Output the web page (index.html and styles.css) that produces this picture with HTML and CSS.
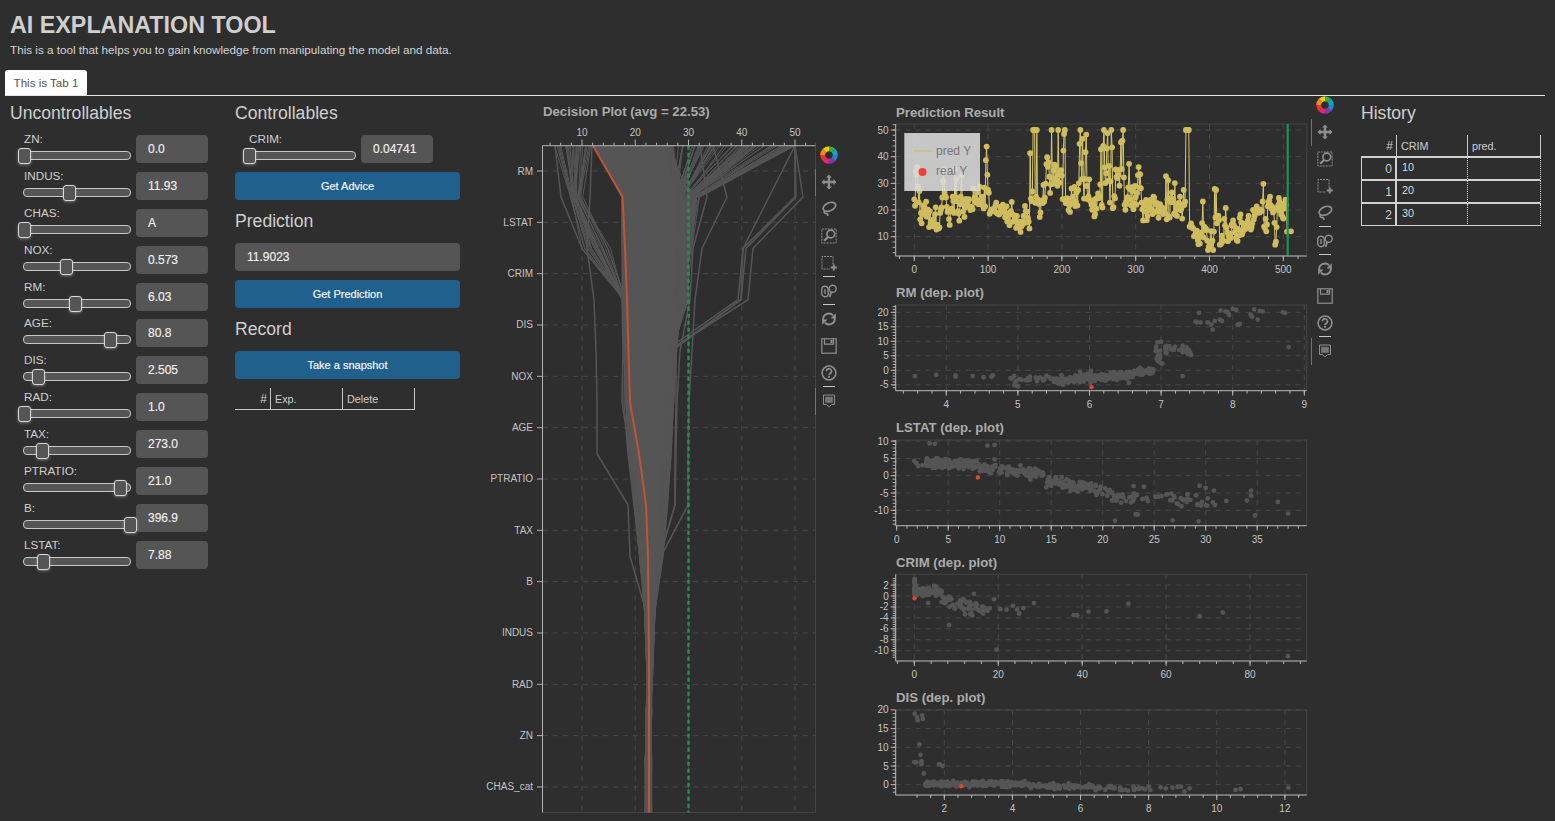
FILE: index.html
```html
<!DOCTYPE html>
<html lang="en">
<head>
<meta charset="utf-8">
<title>AI Explanation Tool</title>
<link rel="stylesheet" href="styles.css">
</head>
<body>
<svg class="sprites" aria-hidden="true">
  <symbol id="i-logo" viewBox="0 0 16 16">
    <path fill="#2fb344" d="M8 .2A7.800 7.800 0 0 1 13.500 2.500L10.400 5.600A3.400 3.400 0 0 0 8 4.600Z"/>
    <path fill="#13a8b8" transform="rotate(45 8 8)" d="M8 .2A7.800 7.800 0 0 1 13.500 2.500L10.400 5.600A3.400 3.400 0 0 0 8 4.600Z"/>
    <path fill="#2b7fd6" transform="rotate(90 8 8)" d="M8 .2A7.800 7.800 0 0 1 13.500 2.500L10.400 5.600A3.400 3.400 0 0 0 8 4.600Z"/>
    <path fill="#7d3aa8" transform="rotate(135 8 8)" d="M8 .2A7.800 7.800 0 0 1 13.500 2.500L10.400 5.600A3.400 3.400 0 0 0 8 4.600Z"/>
    <path fill="#e0257a" transform="rotate(180 8 8)" d="M8 .2A7.800 7.800 0 0 1 13.500 2.500L10.400 5.600A3.400 3.400 0 0 0 8 4.600Z"/>
    <path fill="#e8372c" transform="rotate(225 8 8)" d="M8 .2A7.800 7.800 0 0 1 13.500 2.500L10.400 5.600A3.400 3.400 0 0 0 8 4.600Z"/>
    <path fill="#f5871f" transform="rotate(270 8 8)" d="M8 .2A7.800 7.800 0 0 1 13.500 2.500L10.400 5.600A3.400 3.400 0 0 0 8 4.600Z"/>
    <path fill="#f4c81e" transform="rotate(315 8 8)" d="M8 .2A7.800 7.800 0 0 1 13.500 2.500L10.400 5.600A3.400 3.400 0 0 0 8 4.600Z"/>
  </symbol>
  <symbol id="i-pan" viewBox="0 0 16 16">
    <path fill="currentColor" d="M8 .5l2.900 3H9.200v3.300h3.300V5.100L15.500 8l-3 2.900V9.200H9.200v3.300h1.700L8 15.500l-2.900-3h1.700V9.200H3.500v1.700L.5 8l3-2.900v1.700h3.300V3.500H5.100z"/>
  </symbol>
  <symbol id="i-lasso" viewBox="0 0 16 16">
    <g fill="none" stroke="currentColor" stroke-width="1.700">
      <ellipse cx="8.400" cy="5.800" rx="6.600" ry="4" transform="rotate(-24 8.400 5.800)"/>
      <path d="M3.800 9.200c-1.300 1.900-.4 3.300 1.600 3.500 1.200.1 1.700.7 1.200 2.300"/>
    </g>
  </symbol>
  <symbol id="i-zoom" viewBox="0 0 16 16">
    <rect x=".8" y="1" width="14.400" height="14" fill="none" stroke="currentColor" stroke-dasharray="2 1"/>
    <circle cx="9.800" cy="6" r="3.900" fill="#2e2e2e" stroke="currentColor" stroke-width="1.700"/>
    <path d="M7 8.900L3.200 12.800" stroke="currentColor" stroke-width="2.200"/>
  </symbol>
  <symbol id="i-select" viewBox="0 0 16 16">
    <path d="M12 9.500V1.500H1v12.500H9" fill="none" stroke="currentColor" stroke-dasharray="2 1"/>
    <path d="M12.800 9.500v6M9.800 12.500h6" stroke="currentColor" stroke-width="1.900"/>
  </symbol>
  <symbol id="i-wheel" viewBox="0 0 16 16">
    <g fill="none" stroke="currentColor" stroke-width="1.400">
      <rect x=".8" y="3.200" width="6.400" height="10.600" rx="3.200"/>
      <path d="M4 6v5"/>
      <circle cx="11.700" cy="5.800" r="3.500"/>
      <path d="M10.200 9l-1.600 5" stroke-width="1.900"/>
    </g>
  </symbol>
  <symbol id="i-reset" viewBox="0 0 16 16">
    <g fill="none" stroke="currentColor" stroke-width="1.900">
      <path d="M2.200 9A5.800 5.800 0 0 1 12 4.200"/>
      <path d="M13.800 7A5.800 5.800 0 0 1 4 11.800"/>
    </g>
    <path fill="currentColor" d="M14.800 2.200v5.400H9.400zM1.200 13.800V8.400h5.400z"/>
  </symbol>
  <symbol id="i-save" viewBox="0 0 16 16">
    <g fill="none" stroke="currentColor" stroke-width="1.200">
      <rect x=".8" y=".8" width="14.400" height="14.400"/>
      <path d="M3.500 1v5.200h9V1"/>
    </g>
    <rect x="9.500" y="2" width="2" height="3" fill="currentColor"/>
  </symbol>
  <symbol id="i-help" viewBox="0 0 16 16">
    <circle cx="8" cy="8" r="6.900" fill="none" stroke="currentColor" stroke-width="1.500"/>
    <path d="M5.500 6.300a2.500 2.500 0 1 1 3.700 2.200c-.8.500-1.200.9-1.200 1.800" fill="none" stroke="currentColor" stroke-width="1.600"/>
    <rect x="7.100" y="11" width="1.800" height="1.800" fill="currentColor"/>
  </symbol>
  <symbol id="i-hover" viewBox="0 0 16 16">
    <path d="M2.500 2h11v9.500h-3L8 14l-2.500-2.500h-3z" fill="none" stroke="currentColor"/>
    <rect x="4.200" y="3.800" width="7.600" height="6" fill="currentColor" fill-opacity=".75"/>
  </symbol>
</svg>

<header class="page-head">
  <h1>AI EXPLANATION TOOL</h1>
  <p>This is a tool that helps you to gain knowledge from manipulating the model and data.</p>
</header>

<nav class="tabs"><span class="tab">This is Tab 1</span></nav>

<main class="board">
  <section class="col-unc">
    <h3>Uncontrollables</h3>
    <div class="rows">
      <div class="row"><div class="ctl"><label>ZN:</label><div class="track"><span class="thumb" style="left:-6px"></span></div></div><div class="field">0.0</div></div>
      <div class="row"><div class="ctl"><label>INDUS:</label><div class="track"><span class="thumb" style="left:39px"></span></div></div><div class="field">11.93</div></div>
      <div class="row"><div class="ctl"><label>CHAS:</label><div class="track"><span class="thumb" style="left:-6px"></span></div></div><div class="field">A</div></div>
      <div class="row"><div class="ctl"><label>NOX:</label><div class="track"><span class="thumb" style="left:36px"></span></div></div><div class="field">0.573</div></div>
      <div class="row"><div class="ctl"><label>RM:</label><div class="track"><span class="thumb" style="left:45px"></span></div></div><div class="field">6.03</div></div>
      <div class="row"><div class="ctl"><label>AGE:</label><div class="track"><span class="thumb" style="left:80px"></span></div></div><div class="field">80.8</div></div>
      <div class="row"><div class="ctl"><label>DIS:</label><div class="track"><span class="thumb" style="left:8px"></span></div></div><div class="field">2.505</div></div>
      <div class="row"><div class="ctl"><label>RAD:</label><div class="track"><span class="thumb" style="left:-6px"></span></div></div><div class="field">1.0</div></div>
      <div class="row"><div class="ctl"><label>TAX:</label><div class="track"><span class="thumb" style="left:12px"></span></div></div><div class="field">273.0</div></div>
      <div class="row"><div class="ctl"><label>PTRATIO:</label><div class="track"><span class="thumb" style="left:90px"></span></div></div><div class="field">21.0</div></div>
      <div class="row"><div class="ctl"><label>B:</label><div class="track"><span class="thumb" style="left:100px"></span></div></div><div class="field">396.9</div></div>
      <div class="row"><div class="ctl"><label>LSTAT:</label><div class="track"><span class="thumb" style="left:13px"></span></div></div><div class="field">7.88</div></div>
    </div>
  </section>

  <section class="col-ctl">
    <h3>Controllables</h3>
    <div class="row"><div class="ctl"><label>CRIM:</label><div class="track"><span class="thumb" style="left:-6px"></span></div></div><div class="field">0.04741</div></div>
    <button class="action first">Get Advice</button>
    <h3 class="sub">Prediction</h3>
    <div class="field wide">11.9023</div>
    <button class="action">Get Prediction</button>
    <h3 class="sub">Record</h3>
    <button class="action solo">Take a snapshot</button>
    <table class="grid-table record">
      <thead><tr><th class="num">#</th><th>Exp.</th><th>Delete</th></tr></thead>
    </table>
  </section>

  <section class="col-decision">
    <svg id="decision" class="chart-decision" viewBox="480 100 336 716"></svg>
    <div class="toolbar tb-decision">
      <span class="tool logo"><svg><use href="#i-logo"/></svg></span>
      <span class="tool active"><svg><use href="#i-pan"/></svg></span>
      <span class="tool"><svg><use href="#i-lasso"/></svg></span>
      <span class="tool"><svg><use href="#i-zoom"/></svg></span>
      <span class="tool"><svg><use href="#i-select"/></svg></span>
      <i class="sep"></i>
      <span class="tool"><svg><use href="#i-wheel"/></svg></span>
      <i class="sep"></i>
      <span class="tool"><svg><use href="#i-reset"/></svg></span>
      <span class="tool"><svg><use href="#i-save"/></svg></span>
      <span class="tool"><svg><use href="#i-help"/></svg></span>
      <i class="sep"></i>
      <span class="tool active"><svg><use href="#i-hover"/></svg></span>
    </div>
  </section>

  <section class="col-plots">
    <div class="plots">
      <svg id="pred" class="chart-pred" viewBox="870 100 441 180"></svg>
      <svg id="dep-rm" class="chart-dep" viewBox="870 280 441 135"></svg>
      <svg id="dep-lstat" class="chart-dep" viewBox="870 415 441 135"></svg>
      <svg id="dep-crim" class="chart-dep" viewBox="870 550 441 135"></svg>
      <svg id="dep-dis" class="chart-dep" viewBox="870 685 441 135"></svg>
    </div>
    <div class="toolbar tb-plots">
      <span class="tool logo"><svg><use href="#i-logo"/></svg></span>
      <span class="tool active"><svg><use href="#i-pan"/></svg></span>
      <span class="tool"><svg><use href="#i-zoom"/></svg></span>
      <span class="tool"><svg><use href="#i-select"/></svg></span>
      <span class="tool"><svg><use href="#i-lasso"/></svg></span>
      <i class="sep"></i>
      <span class="tool"><svg><use href="#i-wheel"/></svg></span>
      <i class="sep"></i>
      <span class="tool"><svg><use href="#i-reset"/></svg></span>
      <span class="tool"><svg><use href="#i-save"/></svg></span>
      <span class="tool"><svg><use href="#i-help"/></svg></span>
      <i class="sep"></i>
      <span class="tool active"><svg><use href="#i-hover"/></svg></span>
    </div>
  </section>

  <section class="col-history">
    <h3>History</h3>
    <table class="grid-table history">
      <thead><tr><th class="num">#</th><th>CRIM</th><th>pred.</th></tr></thead>
      <tbody>
        <tr><td class="num">0</td><td>10</td><td></td></tr>
        <tr><td class="num">1</td><td>20</td><td></td></tr>
        <tr><td class="num">2</td><td>30</td><td></td></tr>
      </tbody>
    </table>
  </section>
</main>
<script src="script.js"></script>
</body>
</html>
```
FILE: styles.css
```css
* { box-sizing: border-box; }
html, body { margin: 0; height: 100%; }
body {
  background: #2e2e2e;
  color: #cfcfcf;
  font-family: "Liberation Sans", Arial, sans-serif;
  font-size: 12px;
  overflow: hidden;
}
.sprites { width: 0; height: 0; position: absolute; }

.page-head { padding: 12px 10px 0; height: 70px; }
.page-head h1 {
  margin: 0;
  font-size: 23.300px;
  line-height: 26px;
  font-weight: 700;
  color: #cfcfcf;
}
.page-head p { margin: 4px 0 0; font-size: 11.700px; line-height: 15px; color: #d4d4d4; }

.tabs { margin: 0 10px 0 5px; height: 26px; border-bottom: 1px solid #e6e6e6; display: flex; }
.tab {
  background: #fff;
  color: #555;
  width: 82px;
  height: 25px;
  line-height: 25px;
  text-align: center;
  border-radius: 3px 3px 0 0;
  font-size: 11.600px;
}

.board { display: flex; height: 725px; padding: 7px 0 0 10px; }
h3 {
  margin: 0 0 8px;
  font-size: 17.600px;
  line-height: 20px;
  font-weight: 400;
  color: #cfcfcf;
}
.col-unc { width: 225px; }
.col-ctl { width: 245px; }
.col-decision { width: 390px; display: flex; margin-top: -3px; }
.col-plots { width: 491px; display: flex; margin-top: -3px; }
.col-history { width: 180px; }

.rows { display: flex; flex-direction: column; gap: 3.900px; }
.row { display: flex; height: 33px; }
.ctl { width: 126px; padding-left: 13px; }
.ctl label { display: block; height: 15px; margin-left: 1px; line-height: 16px; font-size: 11.700px; color: #cfcfcf; }
.track {
  position: relative;
  width: 108px;
  height: 9px;
  margin-top: 5px;
  background: #555;
  border: 1px solid #c8c8c8;
  border-radius: 4px;
}
.thumb {
  position: absolute;
  top: -4px;
  width: 13px;
  height: 16px;
  background: #555;
  border: 1px solid #d8d8d8;
  border-radius: 3px;
  box-shadow: 0 1px 3px rgba(255, 255, 255, .35);
}
.field {
  width: 72px;
  height: 28px;
  margin-top: 4px;
  padding-left: 12px;
  line-height: 29px;
  background: #555;
  border-radius: 4px;
  color: #f0f0f0;
  font-size: 12px;
  -webkit-text-stroke: .15px #f0f0f0;
}
.field.wide { width: 225px; margin-top: 0; }

.action {
  display: block;
  width: 225px;
  height: 28px;
  margin: 9px 0 0;
  padding: 0;
  border: 0;
  border-radius: 4px;
  background: #20608c;
  color: #f4f4f4;
  font: 11px/28px "Liberation Sans", Arial, sans-serif;
  -webkit-text-stroke: .2px #f4f4f4;
}
.action.first { margin-top: 8px; }
.action.solo { margin-top: 0; }
.sub { margin: 11px 0 12px; }

.grid-table { border-collapse: separate; border-spacing: 0; table-layout: fixed; font-size: 10.800px; }
.grid-table th {
  height: 22px;
  padding: 0 0 0 4px;
  font-weight: 400;
  text-align: left;
  color: #cfcfcf;
  border-right: 1px solid #c8c8c8;
  border-bottom: 1px solid #c8c8c8;
}
.grid-table .num { text-align: right; padding: 0 3px 0 0; font-size: 12px; }
.record { width: 180px; margin-top: 9px; }
.record th:nth-child(1) { width: 36px; }
.record th:nth-child(2) { width: 72px; }
.record th:nth-child(3) { width: 72px; }

.history { width: 180px; margin-top: 12px; }
.history th { height: 23px; }
.history th:nth-child(1) { width: 36px; border-bottom: 2px solid #d0d0d0; }
.history th:nth-child(2) { width: 71px; border-bottom: 2px solid #d0d0d0; }
.history th:nth-child(3) { width: 73px; border-bottom: 2px solid #d0d0d0; }
.history td {
  height: 23px;
  padding: 0 0 4px 5px;
  color: #dcdcdc;
  border-bottom: 2px solid #d0d0d0;
  border-right: 1px dotted #e0e0e0;
}
.history td.num { color: #cfcfcf; padding: 0 3px 0 0; border-left: 1px solid #d0d0d0; border-right: 2px solid #d0d0d0; }
.history tr:last-child td { border-bottom-width: 1px; height: 22px; }

.chart-decision { width: 336px; height: 716px; flex: none; display: block; }
.plots { width: 441px; flex: none; display: flex; flex-direction: column; }
.chart-pred { width: 441px; height: 180px; display: block; }
.chart-dep { width: 441px; height: 135px; display: block; }

.toolbar { width: 28px; margin-left: -1px; display: flex; flex-direction: column; color: #8f8f8f; flex: none; }
.tb-decision { padding-top: 41.500px; }
.tb-plots { margin-left: 0; padding-top: 0; margin-top: -8.500px; height: 300px; }
.tool { height: 27.100px; display: flex; align-items: center; justify-content: center; flex: none; }
.tool svg { width: 16px; height: 16px; display: block; }
.tool.logo svg { width: 18px; height: 18px; }
.tool.active { box-shadow: inset 1px 0 0 #2f86c0; }
.sep { display: block; width: 12px; height: 1px; margin: -.5px auto 0; background: #c8c8c8; flex: none; }
.sep:nth-last-child(2) { margin-bottom: 1px; }

svg text { font-family: "Liberation Sans", Arial, sans-serif; }
.title { font-size: 13.200px; font-weight: 700; fill: #ababab; }
.tick-label { font-size: 10px; fill: #c4c4c4; }
.grid-line { stroke: #484848; stroke-width: 1; stroke-dasharray: 5 5; fill: none; }
.frame { stroke: #454545; stroke-width: 1; fill: none; }
.axis { stroke: #b4b4b4; stroke-width: 1; fill: none; }
.bundle { stroke: #555; stroke-width: 1; fill: none; }
.lone { stroke: #555; stroke-width: 1.500; fill: none; }
.mass { fill: #555; }
.focus { stroke: #c0533c; stroke-width: 2; fill: none; }
.avg { stroke: #1f9058; stroke-width: 2.500; stroke-dasharray: 4 3; fill: none; }
.marker { stroke: #1f9058; stroke-width: 2.200; fill: none; }
.medv-line { stroke: #d8c96c; stroke-width: 1; fill: none; }
.medv-dot { fill: #cfbc5e; }
.dep-dot { fill: #555; }
.dep-hit { fill: #d9482f; }
.legend-box { fill: #dcdcdc; fill-opacity: .88; }
.legend-line { stroke: #cfbc5e; stroke-width: 1; }
.legend-dot { fill: #f63c3c; }
.legend-text { font-size: 12px; fill: #777; }
```
FILE: script.js
```js
(function () {
  var NS = 'http://www.w3.org/2000/svg';
  var seed = 1234567;
  function rnd() {
    seed |= 0; seed = seed + 0x6D2B79F5 | 0;
    var t = Math.imul(seed ^ seed >>> 15, 1 | seed);
    t = t + Math.imul(t ^ t >>> 7, 61 | t) ^ t;
    return ((t ^ t >>> 14) >>> 0) / 4294967296;
  }
  function rr(a, b) { return a + (b - a) * rnd(); }
  function gauss() { return (rnd() + rnd() + rnd() + rnd() - 2) / 0.82; }

  function el(parent, tag, attrs, text) {
    var e = document.createElementNS(NS, tag);
    for (var k in attrs) e.setAttribute(k, attrs[k]);
    if (text !== undefined) e.textContent = text;
    parent.appendChild(e);
    return e;
  }
  function line(p, cls, x1, y1, x2, y2) { el(p, 'line', { 'class': cls, x1: x1, y1: y1, x2: x2, y2: y2 }); }
  function poly(p, cls, xs, ys) {
    var d = xs.map(function (x, i) { return (i ? 'L' : 'M') + x.toFixed(1) + ' ' + ys[i].toFixed(1); }).join('');
    el(p, 'path', { 'class': cls, d: d });
  }
  function range(from, to, step) {
    var a = [], n = Math.round((to - from) / step);
    for (var i = 0; i <= n; i++) a.push(+(from + i * step).toFixed(4));
    return a;
  }

  /* ---------- Decision plot ---------- */
  (function () {
    var s = document.getElementById('decision');
    var L = 543, R = 815.5, T = 145.7, B = 812.5;
    var vx = function (v) { return 582 + (v - 10) * 5.325; };
    var cats = ['RM', 'LSTAT', 'CRIM', 'DIS', 'NOX', 'AGE', 'PTRATIO', 'TAX', 'B', 'INDUS', 'RAD', 'ZN', 'CHAS_cat'];
    var step = 51.33;
    var catY = function (i) { return 171 + i * step; };
    var Y = range(0, 13, 1).map(function (i) { return i === 13 ? B : T + i * step; });

    el(s, 'text', { 'class': 'title', x: 543, y: 116 }, 'Decision Plot (avg = 22.53)');
    line(s, 'frame', R, T, R, B);
    line(s, 'frame', L, B, R, B);

    [10, 20, 30, 40, 50].forEach(function (v) { line(s, 'grid-line', vx(v), T, vx(v), B); });
    cats.forEach(function (c, i) { line(s, 'grid-line', L, catY(i), R, catY(i)); });

    var left = [594, 622, 625, 625, 626, 628, 631, 636, 641, 645, 647, 648, 648, 648];
    var right = [665, 677, 680, 675, 671, 669, 667, 664, 660, 654, 652, 650, 649, 649];
    el(s, 'polygon', {
      'class': 'mass',
      points: Y.map(function (y, i) { return left[i] + ',' + y; }).concat(
        Y.slice().reverse().map(function (y, i) { return right[13 - i] + ',' + y; })).join(' ')
    });

    var i, k, xs;
    /* body jitter just outside the mass */
    for (i = 0; i < 60; i++) {
      var side = rnd() < .5 ? 0 : 1, w = rr(0, 1);
      xs = left.map(function (l, k) {
        var extra = w * (k < 9 ? (13 - k) * .6 : 1) + rr(-.8, .8);
        return side ? right[k] + extra : l - extra * (k < 2 ? 0 : .45);
      });
      poly(s, 'bundle', xs, Y);
    }
    /* left fan */
    for (i = 0; i < 26; i++) {
      var a = rnd();
      xs = [556 + a * 37 + rr(-2, 2), 568 + a * 13 + rr(-2, 3), 580 + a * 30 + rr(-4, 8), 624 + rr(-1, 2)];
      for (k = 4; k < 14; k++) xs.push(left[k] + rr(0, 4));
      poly(s, 'bundle', xs, Y);
    }
    /* right fan */
    for (i = 0; i < 105; i++) {
      var b = rnd();
      var top = i < 16 ? 795 - rr(0, 4) : 662 + Math.pow(b, 1.5) * 133;
      xs = [top, 672 + (top - 662) / 133 * 25 + rr(-3, 3), 676 + rr(0, 16), 672 + rr(0, 17), 668 + rr(0, 6)];
      for (k = 5; k < 14; k++) xs.push(right[k] - rr(0, 4));
      poly(s, 'bundle', xs, Y);
    }
    /* individually visible outliers */
    var outliers = [
      [795, 803, 753, 748, 668, 666, 664, 662, 658, 652, 650, 649, 649, 649],
      [795, 795, 743, 738, 665, 664, 664, 661, 658, 652, 650, 649, 649, 649],
      [795, 796, 746, 741, 670, 666, 664, 661, 658, 652, 650, 649, 649, 649],
      [795, 769, 743, 741, 672, 668, 666, 661, 657, 652, 650, 649, 649, 649],
      [713, 727, 702, 695, 692, 689, 688, 688, 661, 655, 651, 650, 649, 649],
      [700, 707, 693, 690, 680, 677, 676, 675, 660, 654, 651, 649, 649, 649],
      [555, 561, 582, 625, 625, 624, 628, 634, 640, 645, 647, 648, 648, 648],
      [592, 590, 587, 594, 596, 597, 597, 628, 630, 645, 647, 648, 648, 648],
      [570, 574, 598, 622, 623, 622, 630, 635, 640, 645, 647, 648, 648, 648],
      [668, 690, 684, 681, 676, 676, 675, 675, 660, 654, 651, 649, 649, 649]
    ];
    outliers.forEach(function (o) { poly(s, 'lone', o, Y); });

    poly(s, 'focus', [593, 622.6, 625, 627, 628.5, 630, 639, 646, 648, 648.5, 649, 649, 649, 649], Y);
    line(s, 'avg', 688.5, T, 688.5, B);

    /* axes */
    line(s, 'axis', L - .5, T, R, T);
    line(s, 'axis', L - .5, T, L - .5, B);
    for (var v = 4; v <= 54; v += 2) {
      var major = v % 10 === 0;
      line(s, 'axis', vx(v), T, vx(v), T - (major ? 6 : 3));
    }
    [10, 20, 30, 40, 50].forEach(function (v) {
      el(s, 'text', { 'class': 'tick-label', x: vx(v), y: 136, 'text-anchor': 'middle' }, v);
    });
    cats.forEach(function (c, i) {
      line(s, 'axis', L - 6, catY(i), L, catY(i));
      el(s, 'text', { 'class': 'tick-label', x: 533, y: catY(i) + 3.5, 'text-anchor': 'end' }, c);
    });
  })();

  /* ---------- Shared cartesian frame ---------- */
  function frame(c) {
    var s = document.getElementById(c.id);
    var g = { s: s };
    g.x = function (v) { return c.x0 + (v - c.xv) * c.xs; };
    g.y = function (v) { return c.y0 - (v - c.yv) * c.ys; };
    el(s, 'text', { 'class': 'title', x: 896, y: c.titleY }, c.title);
    el(s, 'rect', { 'class': 'frame', x: c.L, y: c.T, width: c.R - c.L, height: c.B - c.T });
    c.xt.forEach(function (v) { line(s, 'grid-line', g.x(v), c.T, g.x(v), c.B); });
    c.yt.forEach(function (v) { line(s, 'grid-line', c.L, g.y(v), c.R, g.y(v)); });
    g.axes = function () {
      line(s, 'axis', c.L, c.B, c.R, c.B);
      line(s, 'axis', c.L, c.T, c.L, c.B);
      c.xm.forEach(function (v) {
        var px = g.x(v);
        if (px >= c.L && px <= c.R) line(s, 'axis', px, c.B, px, c.B + 3);
      });
      c.ym.forEach(function (v) {
        var py = g.y(v);
        if (py >= c.T && py <= c.B) line(s, 'axis', c.L, py, c.L - 3, py);
      });
      c.xt.forEach(function (v) {
        line(s, 'axis', g.x(v), c.B, g.x(v), c.B + 5);
        el(s, 'text', { 'class': 'tick-label', x: g.x(v), y: c.B + 17, 'text-anchor': 'middle' }, v);
      });
      c.yt.forEach(function (v) {
        line(s, 'axis', c.L, g.y(v), c.L - 5, g.y(v));
        el(s, 'text', { 'class': 'tick-label', x: c.L - 7, y: g.y(v) + 3.5, 'text-anchor': 'end' }, v);
      });
    };
    return g;
  }

  /* ---------- Prediction result ---------- */
  var medv = [24,21.6,34.7,33.4,36.2,28.7,22.9,27.1,16.5,18.9,15,18.9,21.7,20.4,18.2,19.9,23.1,17.5,20.2,18.2,13.6,19.6,15.2,14.5,15.6,13.9,16.6,14.8,18.4,21,12.7,14.5,13.2,13.1,13.5,18.9,20,21,24.7,30.8,34.9,26.6,25.3,24.7,21.2,19.3,20,16.6,14.4,19.4,19.7,20.5,25,23.4,18.9,35.4,24.7,31.6,23.3,19.6,18.7,16,22.2,25,33,23.5,19.4,22,17.4,20.9,24.2,21.7,22.8,23.4,24.1,21.4,20,20.8,21.2,20.3,28,23.9,24.8,22.9,23.9,26.6,22.5,22.2,23.6,28.7,22.6,22,22.9,25,20.6,28.4,21.4,38.7,43.8,33.2,27.5,26.5,18.6,19.3,20.1,19.5,19.5,20.4,19.8,19.4,21.7,22.8,18.8,18.7,18.5,18.3,21.2,19.2,20.4,19.3,22,20.3,20.5,17.3,18.8,21.4,15.7,16.2,18,14.3,19.2,19.6,23,18.4,15.6,18.1,17.4,17.1,13.3,17.8,14,14.4,13.4,15.6,11.8,13.8,15.6,14.6,17.8,15.4,21.5,19.6,15.3,19.4,17,15.6,13.1,41.3,24.3,23.3,27,50,50,50,22.7,25,50,23.8,23.8,22.3,17.4,19.1,23.1,23.6,22.6,29.4,23.2,24.6,29.9,37.2,39.8,36.2,37.9,32.5,26.4,29.6,50,32,29.8,34.9,37,30.5,36.4,31.1,29.1,50,33.3,30.3,34.6,34.9,32.9,24.1,42.3,48.5,50,22.6,24.4,22.5,24.4,20,21.7,19.3,22.4,28.1,23.7,25,23.3,28.7,21.5,23,26.7,21.7,27.5,30.1,44.8,50,37.6,31.6,46.7,31.5,24.3,31.7,41.7,48.3,29,24,25.1,31.5,23.7,23.3,22,20.1,22.2,23.7,17.6,18.5,24.3,20.5,24.5,26.2,24.4,24.8,29.6,42.8,21.9,20.9,44,50,36,30.1,33.8,43.1,48.8,31,36.5,22.8,30.7,50,43.5,20.7,21.1,25.2,24.4,35.2,32.4,32,33.2,33.1,29.1,35.1,45.4,35.4,46,50,32.2,22,20.1,23.2,22.3,24.8,28.5,37.3,27.9,23.9,21.7,28.6,27.1,20.3,22.5,29,24.8,22,26.4,33.1,36.1,28.4,33.4,28.2,22.8,20.3,16.1,22.1,19.4,21.6,23.8,16.2,17.8,19.8,23.1,21,23.8,23.1,20.4,18.5,25,24.6,23,22.2,19.3,22.6,19.8,17.1,19.4,22.2,20.7,21.1,19.5,18.5,20.6,19,18.7,32.7,16.5,23.9,31.2,17.5,17.2,23.1,24.5,26.6,22.9,24.1,18.6,30.1,18.2,20.6,17.8,21.7,22.7,22.6,25,19.9,20.8,16.8,21.9,27.5,21.9,23.1,50,50,50,50,50,13.8,13.8,15,13.9,13.3,13.1,10.2,10.4,10.9,11.3,12.3,8.8,7.2,10.5,7.4,10.2,11.5,15.1,23.2,9.7,13.8,12.7,13.1,12.5,8.5,5,6.3,5.6,7.2,12.1,8.3,8.5,5,11.9,27.9,17.2,27.5,15,17.2,17.9,16.3,7,7.2,7.5,10.4,8.8,8.4,16.7,14.2,20.8,13.4,11.7,8.3,10.2,10.9,11,9.5,14.5,14.1,16.1,14.3,11.7,13.4,9.6,8.7,8.4,12.8,10.5,17.1,18.4,15.4,10.8,11.8,14.9,12.6,14.1,13,13.4,15.2,16.1,17.8,14.9,14.1,12.7,13.5,14.9,20,16.4,17.7,19.5,20.2,21.4,19.9,19,19.1,19.1,20.1,19.9,19.6,23.2,29.8,13.8,13.3,16.7,12,14.6,21.4,23,23.7,25,21.8,20.6,21.2,19.1,20.6,15.2,7,8.1,13.6,20.1,21.8,24.5,23.1,19.7,18.3,21.2,17.5,16.8,22.4,20.6,23.9,22,11.9];

  (function () {
    var g = frame({
      id: 'pred', title: 'Prediction Result', titleY: 116.5,
      L: 895.7, R: 1306.7, T: 124, B: 256,
      x0: 914.3, xv: 0, xs: .738, y0: 130, yv: 50, ys: 2.667,
      xt: [0, 100, 200, 300, 400, 500], xm: range(-20, 520, 20),
      yt: [10, 20, 30, 40, 50], ym: range(4, 52, 2)
    });
    var s = g.s;
    var xs = medv.map(function (v, i) { return g.x(i); });
    var ys = medv.map(function (v) { return g.y(v); });
    poly(s, 'medv-line', xs, ys);
    medv.forEach(function (v, i) { el(s, 'circle', { 'class': 'medv-dot', cx: xs[i], cy: ys[i], r: 2.9 }); });
    el(s, 'circle', { 'class': 'medv-dot', cx: 1291, cy: g.y(12), r: 2.9 });
    line(s, 'marker', 1287.7, 124, 1287.7, 256);
    g.axes();
    el(s, 'rect', { 'class': 'legend-box', x: 904.3, y: 133, width: 75.7, height: 58 });
    line(s, 'legend-line', 913.5, 151, 932, 151);
    el(s, 'circle', { 'class': 'legend-dot', cx: 922.5, cy: 172, r: 4 });
    el(s, 'text', { 'class': 'legend-text', x: 936, y: 155 }, 'pred Y');
    el(s, 'text', { 'class': 'legend-text', x: 936, y: 175 }, 'real Y');
  })();

  /* ---------- Dependence plots ---------- */
  function scatter(g, pts, hit) {
    pts.forEach(function (p) { el(g.s, 'circle', { 'class': 'dep-dot', cx: g.x(p[0]), cy: g.y(p[1]), r: 2.4 }); });
    el(g.s, 'circle', { 'class': 'dep-hit', cx: g.x(hit[0]), cy: g.y(hit[1]), r: 2.2 });
    g.axes();
  }
  function cloud(list, n, x0, x1, fn, sd) {
    for (var i = 0; i < n; i++) {
      var x = rr(x0, x1);
      list.push([x, fn(x) + gauss() * sd]);
    }
  }

  (function () {
    var g = frame({
      id: 'dep-rm', title: 'RM (dep. plot)', titleY: 296.5,
      L: 895.7, R: 1306.7, T: 305, B: 390.7,
      x0: 946.3, xv: 4, xs: 71.6, y0: 370.3, yv: 0, ys: 2.9,
      xt: [4, 5, 6, 7, 8, 9], xm: range(3.4, 9, .2),
      yt: [-5, 0, 5, 10, 15, 20], ym: range(-6, 22, 1)
    });
    var p = [[3.56,-2],[3.86,-1.5],[4.13,-2.2],[4.13,-1.8],[4.37,-2],[4.52,-2.4],[4.63,-2.2],[4.65,-1.8],[4.97,-5.1],[5,-5.5],[4.95,-5.2],[7.3,-2],[6.55,-4.3],[6.02,-.2],[5.87,-.5]];
    cloud(p, 25, 4.88, 5.5, function () { return -3.1; }, .9);
    cloud(p, 230, 5.5, 6.55, function (x) { return -3.7 + (x - 5.5) * 2; }, .85);
    cloud(p, 55, 6.55, 6.9, function (x) { return -1.4 + (x - 6.55) * 4; }, 1);
    cloud(p, 16, 6.92, 7.02, function () { return 5; }, 2.4);
    cloud(p, 24, 7.05, 7.42, function (x) { return 7.3 - (x - 7.05) * 2.5; }, 1);
    [[6.95,9.7],[7,9.8],[7.3,8.5],[7.42,5.2],[7.48,16.8],[7.5,16.5],[7.53,19.8],[7.55,16.5],[7.65,16.5],[7.7,15.8],[7.72,14],[7.75,17],[7.83,20.6],[7.82,17.5],[7.85,17],[7.9,20.3],[7.93,20],[7.95,19],[8,21.2],[8.05,20.8],[8.07,15.7],[8.1,16],[8.25,19.2],[8.27,18.5],[8.3,21],[8.35,17.5],[8.38,20.5],[8.42,20.3],[8.7,20],[8.73,19.8],[8.78,8]].forEach(function (q) { p.push(q); });
    scatter(g, p, [6.03, -5.8]);
  })();

  (function () {
    var g = frame({
      id: 'dep-lstat', title: 'LSTAT (dep. plot)', titleY: 431.5,
      L: 895.7, R: 1306.7, T: 440, B: 525.7,
      x0: 896.7, xv: 0, xs: 10.3, y0: 475.7, yv: 0, ys: 3.46,
      xt: [0, 5, 10, 15, 20, 25, 30, 35], xm: range(0, 39, 1),
      yt: [-10, -5, 0, 5, 10], ym: range(-14, 10, 1)
    });
    var p = [[3.2,9.3],[3.7,9.2],[8.8,8.7],[9.5,8.9],[9.5,4.7],[21.2,-13],[26.8,-12.9],[29.3,-13.2],[23.2,-11.2],[23.4,-11.2],[34.8,-11.5],[38,-11],[1.7,4.3],[1.9,3.6],[2.1,2.8],[2.5,3],[37,-7.6],[34,-7.2],[34.4,-4.3],[34.4,-5.8],[32,-7.3],[30.8,-4.3],[30.7,-7.7],[30.9,-8.5],[30,-8.6],[29.4,-2.9],[30,-3.5],[12,3],[23,-3],[24,-3.2]];
    cloud(p, 125, 2.8, 8, function () { return 3.5; }, 1);
    cloud(p, 105, 8, 14.3, function (x) { return 2.2 - (x - 8) * .28; }, 1);
    cloud(p, 85, 14.4, 19, function (x) { return -2 - (x - 14.4) * .25; }, 1.1);
    cloud(p, 30, 19, 22, function (x) { return -4 - (x - 19) * .6; }, 1.4);
    cloud(p, 40, 22, 31, function (x) { return -6.2 - (x - 22) * .12; }, 1.3);
    scatter(g, p, [7.88, -.5]);
  })();

  (function () {
    var g = frame({
      id: 'dep-crim', title: 'CRIM (dep. plot)', titleY: 566.5,
      L: 895.7, R: 1306.7, T: 574.3, B: 661,
      x0: 914.3, xv: 0, xs: 4.197, y0: 596, yv: 0, ys: 5.47,
      xt: [0, 20, 40, 60, 80], xm: range(-4, 92, 4),
      yt: [-10, -8, -6, -4, -2, 0, 2], ym: range(-11.2, 3.2, .4)
    });
    var p = [[8.3,-5.3],[19.6,-9.8],[89,-11],[73.5,-3],[68,-3.7],[51,-1.4],[45.8,-2.8],[41.5,-2.9],[38,-3.5],[38.8,-3.5],[28.5,-1.3],[26,-2.2],[25,-3.2],[24.5,-2.5],[23.5,-1.8],[22,-2.5],[20.5,-2.4],[19,-.6],[14.2,.4],[3.3,-1.3],[18,-2.2],[17.5,-2.7]];
    cloud(p, 30, 0, .4, function () { return 1; }, 1.1);
    cloud(p, 6, 0, .15, function () { return 3; }, .3);
    cloud(p, 110, .2, 6.5, function () { return .8; }, .5);
    cloud(p, 40, 6.5, 15, function (x) { return -.5 - (x - 6.5) * .2; }, .8);
    cloud(p, 14, 12, 17, function () { return -2.6; }, .7);
    scatter(g, p, [.05, -.4]);
  })();

  (function () {
    var g = frame({
      id: 'dep-dis', title: 'DIS (dep. plot)', titleY: 701.5,
      L: 895.7, R: 1306.7, T: 710, B: 795,
      x0: 944.3, xv: 2, xs: 34.06, y0: 784.7, yv: 0, ys: 3.74,
      xt: [2, 4, 6, 8, 10, 12], xm: range(1.2, 12.8, .4),
      yt: [0, 5, 10, 15, 20], ym: range(-2, 20, 1)
    });
    var p = [[1.13,19],[1.2,18],[1.22,17.2],[1.35,18.5],[1.37,17.6],[1.27,10.8],[1.3,8],[1.33,6.3],[1.33,5.5],[1.12,6],[1.18,6],[1.4,3],[1.85,5.5],[1.95,5],[10.55,-1.4],[10.7,-1.2],[12.1,-.8],[9.05,-1.8],[9.2,-1],[8.35,-.7],[8.5,-1],[8.7,-.8],[8.85,-.6],[8.95,-.5]];
    cloud(p, 200, 1.4, 4.5, function () { return .2; }, .5);
    cloud(p, 65, 4.5, 6.6, function (x) { return -.2 - (x - 4.5) * .3; }, .55);
    cloud(p, 26, 6.6, 8.1, function () { return -1; }, .45);
    scatter(g, p, [2.5, -.4]);
  })();
})();
```
